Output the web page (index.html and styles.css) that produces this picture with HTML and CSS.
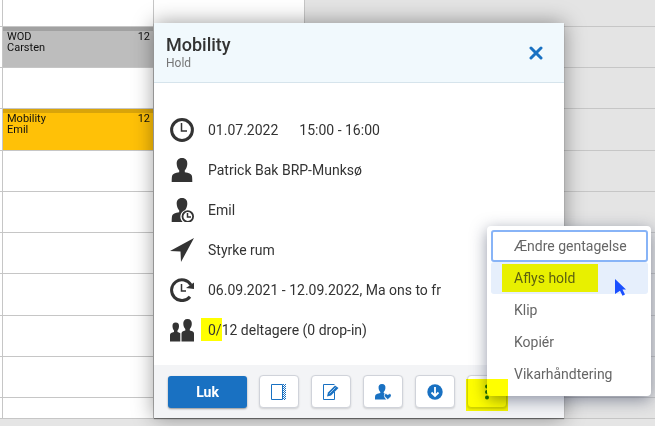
FILE: index.html
```html
<!DOCTYPE html>
<html lang="da">
<head>
<meta charset="utf-8">
<meta name="viewport" content="width=device-width, initial-scale=1">
<title>Mobility</title>
<link rel="stylesheet" href="styles.css">
</head>
<body>
<main class="calendar">
  <div class="day gutter"><i></i><i></i><i></i><i></i><i></i><i></i><i></i><i></i><i></i><i></i><i></i></div>
  <div class="day">
    <i></i>
    <article class="event cancelled"><div>WOD<br>Carsten</div><span>12</span></article>
    <i></i>
    <article class="event"><div>Mobility<br>Emil</div><span>12</span></article>
    <i></i><i></i><i></i><i></i><i></i><i></i><i></i>
  </div>
  <div class="day"><i></i><i></i><i></i><i></i><i></i><i></i><i></i><i></i><i></i><i></i><i></i></div>
  <div class="day closed"><i></i><i></i><i></i><i></i><i></i><i></i><i></i><i></i><i></i><i></i><i></i></div>
</main>

<section class="dialog" role="dialog" aria-labelledby="title">
  <header class="dialog-head">
    <div>
      <h1 id="title">Mobility</h1>
      <p>Hold</p>
    </div>
    <button class="close" aria-label="Luk vindue"><svg viewBox="0 0 14 14" width="14" height="14"><path d="M2 2l10 10M12 2L2 12" stroke="#1971c2" stroke-width="3" stroke-linecap="round"/></svg></button>
  </header>
  <ul class="details">
    <li><svg viewBox="0 0 24 24"><circle cx="12" cy="12" r="10.4" fill="none" stroke="#333" stroke-width="3"/><path d="M11.500 5v8H17" fill="none" stroke="#333" stroke-width="1.500"/></svg><span>01.07.2022</span><span class="time">15:00 - 16:00</span></li>
    <li><svg viewBox="0 0 24 24"><path d="M12 0c3.7 0 5.5 2.400 5.300 6-.2 2.900-1.200 5-2.500 6.300v1.900c4 .7 6.500 1.300 7.100 3.600.3 1.500.4 3.700.4 6.200H1.700c0-2.500.1-4.700.4-6.200.6-2.300 3.100-2.900 7.100-3.600v-1.900C7.900 11 6.900 8.900 6.700 6 6.500 2.400 8.300 0 12 0z"/></svg><span>Patrick Bak BRP-Munksø</span></li>
    <li><svg viewBox="0 0 24 24"><path d="M12 0c3.700 0 5.500 2.400 5.300 6-.2 2.900-1.200 5-2.500 6.300A7 7 0 0 0 12.600 24H1.700c0-2.500.1-4.700.4-6.200.6-2.300 3.100-2.900 7.100-3.600v-1.900C7.900 11 6.900 8.900 6.700 6 6.500 2.400 8.300 0 12 0z"/><circle cx="17.800" cy="18.500" r="5.300" fill="#fff" stroke="#333" stroke-width="1.800"/><path d="M17.500 15v4H21" fill="none" stroke="#333" stroke-width="1.500"/></svg><span>Emil</span></li>
    <li><svg viewBox="0 0 24 24"><path d="M24 0L11 24l-.5-10.500L0 13z"/></svg><span>Styrke rum</span></li>
    <li><svg viewBox="0 0 24 24"><path d="M20 18.800A10.400 10.400 0 1 1 21 7" fill="none" stroke="#333" stroke-width="3"/><path d="M24 4.500v6.500l-8-1z"/><path d="M11.500 6v7H16" fill="none" stroke="#333" stroke-width="1.500"/></svg><span>06.09.2021 - 12.09.2022, Ma ons to fr</span></li>
    <li><svg viewBox="0 0 24 24"><path d="M17.500 1c3 0 4.500 2 4.300 5-.2 2.400-1 3.900-2 5v1.500c2.800.6 4 1.200 4.200 3V23.500H11.500v-8c.2-1.800 1.400-2.400 3.800-3V11c-1-1.100-1.800-2.600-2-5-.2-3 1.200-5 4.200-5z"/><path d="M5.700 4.500c2.400 0 3.500 1.600 3.300 4-.1 1.900-.8 3.200-1.500 4V14c1 .3 2 .7 2.800 1.200v8.300H0v-6.800C.2 15 1.500 14.500 4 14v-1.500c-.7-.8-1.400-2.100-1.500-4-.2-2.400.8-4 3.200-4z"/></svg><span><span class="count">0/</span>12 deltagere (0 drop-in)</span></li>
  </ul>
  <footer class="actions">
    <button class="primary">Luk</button>
    <button class="tool" aria-label="Panel"><svg viewBox="0 0 16 16"><path d="M.5.5h11v15H.5z" fill="none" stroke="#1971c2"/><path d="M12.500 0v16M14.500 0v16" stroke="#1971c2" stroke-dasharray="1 1"/><path d="M13.500 1v15" stroke="#1971c2" stroke-dasharray="1 1"/></svg></button>
    <button class="tool" aria-label="Rediger"><svg viewBox="0 0 16 16"><path d="M11.500 8v7.500H.5V.5h11" fill="none" stroke="#1971c2"/><path d="M4 12.500l1-4L12 1.500l3.500 2.500L8 11.500z"/><path d="M6.500 9.500l6-6" stroke="#fff" stroke-width=".6"/></svg></button>
    <button class="tool" aria-label="Deltager"><svg viewBox="0 0 16 16"><path d="M7 0c2.700 0 3.700 1.800 3.400 4.200-.2 1.800-.9 3-1.700 3.700v1.200l1 .4c-1.600 2-.2 4.500 1.800 6H0c0-4 .3-5 2.500-5.700l2.800-.7V7.900C4.500 7.200 3.800 6 3.600 4.200 3.300 1.800 4.300 0 7 0z"/><path d="M12.800 15.500l-3-2.800c-1.700-2.300 1.500-4.200 3-1.700 1.500-2.500 4.700-.6 3 1.700z" stroke="#fff" stroke-width=".5"/></svg></button>
    <button class="tool" aria-label="Hent"><svg viewBox="0 0 16 16"><circle cx="8" cy="8" r="7.700"/><path d="M8 3v9M4.500 8.500L8 12l3.500-3.500" fill="none" stroke="#fff" stroke-width="1.800"/></svg></button>
    <button class="tool" aria-label="Mere"><svg viewBox="0 0 16 16"><circle cx="8" cy="2.500" r="2"/><circle cx="8" cy="8" r="2"/><circle cx="8" cy="13.500" r="2"/></svg></button>
  </footer>
</section>

<menu class="menu">
  <li><button class="focused">Ændre gentagelse</button></li>
  <li><button class="hovered"><span>Aflys hold</span></button></li>
  <li><button>Klip</button></li>
  <li><button>Kopiér</button></li>
  <li><button>Vikarhåndtering</button></li>
</menu>
<div class="marker"></div>
<svg class="cursor" viewBox="0 0 12 18" aria-hidden="true"><path d="M0 0l11 10.500H7.500l2.500 5-2.500 1.300-2.500-5L0 15z" fill="#1a4fff"/></svg>
</body>
</html>
```

FILE: styles.css
```css
* { box-sizing: border-box; }

body {
  margin: 0;
  min-height: 100vh;
  background: #e5e5e5;
  color: #333;
  font-family: Roboto, "Liberation Sans", sans-serif;
  font-size: 14px;
}

button { font: inherit; color: inherit; padding: 0; border: 0; background: none; }
svg { display: block; fill: #333; }

/* Calendar */
.calendar {
  display: grid;
  grid-template-columns: 3px 151px 151px 1fr;
  height: calc(100vh - 7px);
}
.day {
  display: grid;
  grid-template-rows: 27px repeat(9, 1fr) 21px;
  border-right: 1px solid #c6c6c6;
  background: #fff;
}
.day > * { border-bottom: 1px solid #c6c6c6; }
.closed { background: #e4e4e4; border-right: 0; }
.event {
  display: flex;
  justify-content: space-between;
  padding: 0 3px 0 4px;
  border-top: 4px solid #d9a40a;
  background: #ffc107;
  color: #111;
  font-size: 11px;
  line-height: 11px;
}
.cancelled { background: #bdbdbd; border-top-color: #a1a1a1; }

/* Dialog */
.dialog {
  position: absolute;
  top: 23px;
  left: 154px;
  width: 410px;
  background: #fff;
  box-shadow: 0 0 20px rgba(0, 0, 0, .4), 0 1px 1px rgba(0, 0, 0, .4);
}
.dialog-head {
  display: flex;
  justify-content: space-between;
  align-items: center;
  height: 60px;
  padding: 0 21px 0 12px;
  border-bottom: 1px solid #d6e4ec;
  background: #f1f9fd;
}
h1 { margin: 0; font-size: 18px; line-height: 20px; font-weight: 500; }
.dialog-head p { margin: 0; font-size: 12px; line-height: 16px; color: #777; }
.details { margin: 0; padding: 27px 16px 15px; list-style: none; }
.details li { display: flex; align-items: center; height: 40px; }
.details svg { width: 24px; height: 24px; margin-right: 14px; }
.time { margin-left: 21px; }
.count { padding: 4px 0 3px 7px; margin-left: -7px; background: #ff0; }
.actions {
  display: flex;
  align-items: center;
  gap: 12px;
  height: 53px;
  padding: 0 14px;
  background: #f3f4f6;
}
.primary {
  width: 79px;
  height: 32px;
  border-radius: 3px;
  background: #1971c2;
  color: #fff;
  font-weight: 700;
  box-shadow: 0 1px 2px rgba(0, 0, 0, .4);
}
.tool {
  display: grid;
  place-items: center;
  width: 40px;
  height: 33px;
  border: 1px solid #d0d3da;
  border-radius: 4px;
  background: #fff;
  box-shadow: 0 1px 2px rgba(0, 0, 0, .15);
}
.tool svg { width: 16px; height: 16px; fill: #1971c2; }

/* Context menu */
.menu {
  position: absolute;
  top: 226px;
  left: 487px;
  width: 164px;
  margin: 0;
  padding: 4px 3px 6px 4px;
  border-radius: 4px;
  background: #fff;
  color: #666;
  list-style: none;
  box-shadow: 0 4px 16px rgba(40, 50, 80, .5);
}
.menu button {
  display: block;
  width: 100%;
  height: 32px;
  padding-left: 21px;
  border: 2px solid transparent;
  border-radius: 3px;
  text-align: left;
}
.menu .focused { border-color: #88b4f7; }
.menu .hovered { background: #e6effc; }
.hovered span {
  display: inline-block;
  margin-left: -12px;
  padding: 0 23px 0 12px;
  line-height: 28px;
  background: #e8f000;
  color: #5c6010;
}

/* Highlighter stroke over the "more" button and the menu corner */
.marker {
  position: absolute;
  top: 379px;
  left: 466px;
  width: 42px;
  height: 32px;
  background: #ff0;
  mix-blend-mode: multiply;
  pointer-events: none;
}
.cursor { position: absolute; top: 279px; left: 615px; width: 12px; height: 18px; }
```
